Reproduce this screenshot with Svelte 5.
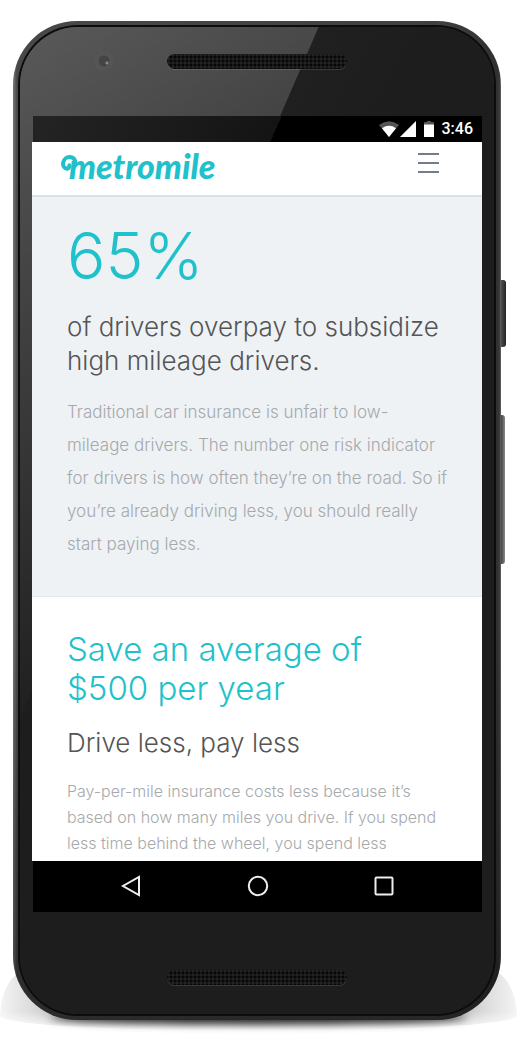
<script>
  const heroText = [
    'Traditional car insurance is unfair to low-',
    'mileage drivers. The number one risk indicator',
    'for drivers is how often they’re on the road. So if',
    'you’re already driving less, you should really',
    'start paying less.'
  ];
  const savingsText = [
    'Pay-per-mile insurance costs less because it’s',
    'based on how many miles you drive. If you spend',
    'less time behind the wheel, you spend less'
  ];
</script>

<div class="stage">
  <div class="phone">
    <span class="key power"></span>
    <span class="key volume"></span>
    <div class="face">
      <div class="top-bezel">
        <span class="camera"></span>
        <span class="speaker"></span>
      </div>

      <div class="status">
        <svg class="wifi" width="20" height="16" viewBox="0 0 20 16" aria-hidden="true">
          <path d="M0 4Q10-3.4 20 4L10 16Z" fill="#555" />
          <path d="M3 7.2Q10 2.4 17 7.2L10 16Z" fill="#fff" />
        </svg>
        <svg width="16" height="16" viewBox="0 0 16 16" aria-hidden="true">
          <path d="M16 0V16H0Z" fill="#fff" />
        </svg>
        <svg class="battery" width="10" height="16" viewBox="0 0 10 16" aria-hidden="true">
          <path d="M0 1H3V0H7V1H10V5H0Z" fill="#555" />
          <path d="M0 3.500H10V16H0Z" fill="#fff" />
        </svg>
        <time>3:46</time>
      </div>

      <div class="page">
        <header>
          <a class="logo" href="#home">
            <svg width="18" height="20" viewBox="0 0 18 20" aria-hidden="true">
              <path d="M6.500 13.500C3 14 1.600 10.500 2.200 7.500C3 3.800 6 1.800 9 2.100C12.500 2.500 14.800 5 14.300 10" />
              <path d="M6.500 13.500C8.200 12.900 8.800 11.500 8.300 10.300" />
            </svg>
            <span>metromile</span>
          </a>
          <button aria-label="Menu"><i></i><i></i><i></i></button>
        </header>
        <section class="hero">
          <h1>65%</h1>
          <h2>of drivers overpay to subsidize<br />high mileage drivers.</h2>
          <p>{#each heroText as line}{line}<br />{/each}</p>
        </section>
        <section class="savings">
          <h1>Save an average of<br />$500 per year</h1>
          <h2>Drive less, pay less</h2>
          <p>{#each savingsText as line}{line}<br />{/each}</p>
        </section>
      </div>

      <nav aria-label="System">
        <button aria-label="Back">
          <svg width="22" height="22" viewBox="0 0 22 22"><path d="M19 2V20L3 11Z" /></svg>
        </button>
        <button aria-label="Home">
          <svg width="22" height="22" viewBox="0 0 22 22"><circle cx="11" cy="11" r="9.200" /></svg>
        </button>
        <button aria-label="Recent apps">
          <svg width="22" height="22" viewBox="0 0 22 22"><rect x="2.500" y="2.500" width="17" height="17" rx="1" /></svg>
        </button>
      </nav>
      <div class="bottom-bezel"><span class="speaker"></span></div>
    </div>
  </div>
</div>

<style>
  :global(body) {
    margin: 0;
    background: #fff;
  }
  .stage {
    position: relative;
    padding: 21px 16px 24px 13px;
    font-family: Inter, 'Liberation Sans', sans-serif;
    overflow: hidden;
  }
  .stage::before {
    content: '';
    position: absolute;
    left: 0;
    right: 0;
    bottom: 14px;
    height: 62px;
    border-radius: 40px 40px 50% 50% / 60px 60px 18px 18px;
    background: linear-gradient(90deg, #f4f4f4, #ddd 30px, #aaa 80px, #aaa calc(100% - 80px), #ddd calc(100% - 30px), #f4f4f4);
    mask-image: linear-gradient(#000 70%, transparent);
  }
  .stage::after {
    content: '';
    position: absolute;
    left: 50px;
    right: 50px;
    bottom: 20px;
    height: 14px;
    border-radius: 50%;
    background: #222;
    filter: blur(4px);
  }
  .phone {
    position: relative;
    z-index: 1;
    padding: 6px 7px 6px 7px;
    border-radius: 64px;
    background: linear-gradient(90deg, #777, #484848 4px, #484848 60px, #404040 calc(100% - 60px), #303030 calc(100% - 4px), #3c3c3c calc(100% - 1px), #777);
  }
  .phone::after {
    content: '';
    position: absolute;
    inset: 0;
    border-radius: 64px;
    background: linear-gradient(transparent 60%, rgba(0, 0, 0, 0.4));
  }
  .key {
    position: absolute;
    left: 100%;
    width: 5px;
    background: linear-gradient(90deg, #505050, #222);
    border-radius: 0 3px 3px 0;
  }
  .power {
    top: 259px;
    height: 67px;
  }
  .volume {
    top: 394px;
    height: 149px;
    width: 4px;
    background: linear-gradient(90deg, #444, #888);
  }
  .face {
    position: relative;
    z-index: 1;
    border-radius: 58px;
    padding: 0 12px;
    background: linear-gradient(120deg, #282828, #1d1d1d 40%);
    box-shadow: 0 0 0 2px #0c0c0c;
  }
  .face::before {
    content: '';
    position: absolute;
    inset: 0;
    border-radius: 58px;
    background: linear-gradient(155deg, rgba(255, 255, 255, 0.23), rgba(255, 255, 255, 0.15) 20%, rgba(255, 255, 255, 0) 60%);
    clip-path: polygon(0 0, 63% 0, 0 70%);
  }
  .top-bezel,
  .bottom-bezel {
    position: relative;
    display: flex;
    justify-content: center;
  }
  .top-bezel {
    padding: 27px 0 47px;
  }
  .bottom-bezel {
    padding: 58px 0 29px;
  }
  .camera {
    position: absolute;
    left: 62px;
    top: 24px;
    width: 20px;
    height: 20px;
    border-radius: 50%;
    background: radial-gradient(circle at 65% 60%, #888 0 1px, transparent 2px), radial-gradient(circle, #444 0 5px, #555 6px);
  }
  .speaker {
    width: 180px;
    height: 15px;
    border-radius: 8px;
    background: radial-gradient(circle, #070707 0 1px, transparent 2px) 2px 1px / 4px 4px, #232323;
    box-shadow: 0 1px 0 rgba(255, 255, 255, 0.12);
  }
  .status {
    position: relative;
    display: flex;
    align-items: center;
    justify-content: flex-end;
    height: 26px;
    margin-left: 1px;
    padding-right: 9px;
    background: linear-gradient(114deg, #242424, #141414 54%, #000 54%);
    color: #fff;
  }
  .wifi {
    margin-right: 1px;
  }
  .battery {
    margin: 0 8px;
  }
  time {
    font: 500 16px/28px Roboto, sans-serif;
  }
  .page {
    position: relative;
    background: #fff;
  }
  header {
    display: flex;
    align-items: center;
    justify-content: space-between;
    height: 53px;
    padding: 0 43px 0 29px;
    border-bottom: 2px solid #dbe0e5;
  }
  .logo {
    display: flex;
    align-items: flex-start;
    color: #1fc1cb;
    text-decoration: none;
  }
  .logo svg {
    margin-right: -10px;
    fill: none;
    stroke: #1fc1cb;
    stroke-width: 4;
    stroke-linecap: round;
  }
  .logo span {
    margin-top: -6px;
    font: italic 900 34px/34px Lato, sans-serif;
  }
  header button {
    display: grid;
    gap: 7px;
    margin: 0 0 12px;
    padding: 0;
    border: 0;
    background: none;
  }
  header i {
    width: 21px;
    height: 2px;
    background: #727d89;
  }
  section {
    padding: 0 20px 0 35px;
  }
  h1,
  h2,
  p {
    margin: 0;
    font-weight: 300;
    white-space: nowrap;
  }
  h1 {
    color: #1fc1cb;
  }
  h2 {
    color: #555;
    font-size: 26px;
    line-height: 34px;
  }
  p {
    color: #a6a9ac;
  }
  .hero {
    padding-top: 21px;
    padding-bottom: 35px;
    background: #eef2f5;
    border-bottom: 1px solid #e3e9ea;
  }
  .hero h1 {
    font-size: 64px;
    line-height: 76px;
  }
  .hero h2 {
    margin: 16px 0 18px;
  }
  .hero p {
    font-size: 17px;
    line-height: 33px;
  }
  .savings {
    padding-top: 33px;
    padding-bottom: 5px;
  }
  .savings h1 {
    font-size: 33px;
    line-height: 39px;
  }
  .savings h2 {
    margin: 18px 0;
  }
  .savings p {
    font-size: 16px;
    line-height: 26px;
  }
  nav {
    position: relative;
    display: flex;
    justify-content: space-between;
    margin-left: 1px;
    padding: 14px 87px 15px;
    background: #000;
  }
  nav button {
    display: flex;
    padding: 0;
    border: 0;
    background: none;
  }
  nav svg {
    fill: none;
    stroke: #eee;
    stroke-width: 2;
  }
</style>
